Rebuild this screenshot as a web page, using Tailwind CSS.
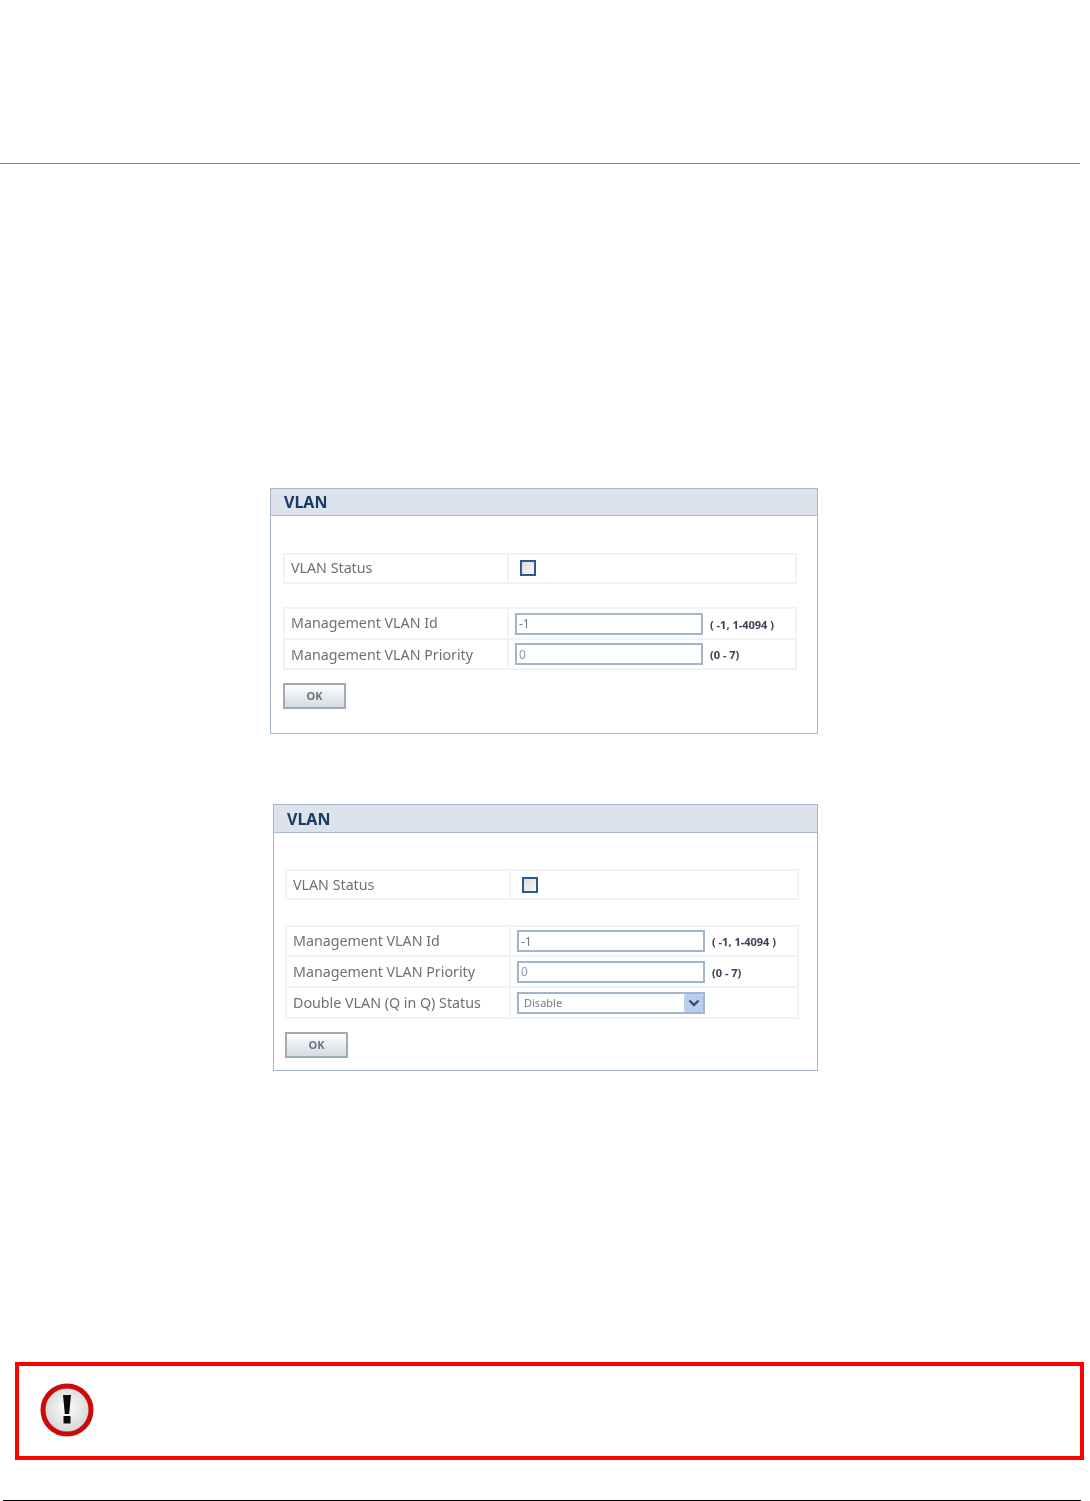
<!DOCTYPE html>
<html lang="en">
<head>
    <meta charset="UTF-8">
    <title>VLAN</title>
    <script src="https://cdn.jsdelivr.net/npm/@tailwindcss/browser@4"></script>
</head>
<body class="bg-white font-['Noto_Sans',sans-serif]">
    <!-- Top rule -->
    <div class="pt-[163px]">
        <div class="h-px w-[1080px] bg-[#808080]"></div>
    </div>

    <!-- VLAN panel, without Q in Q -->
    <section class="ml-[270px] mt-[324px] h-[246px] w-[548px] border border-[#a6b6cc] blur-[0.3px]">
        <h2 class="h-[27px] border-b border-[#a9b9cf] bg-[#dce3ec] pl-[13px] text-[16px] leading-[27px] font-bold text-[#1c3a66]">VLAN</h2>
        <div class="ml-[12px] mt-[37px] w-[514px] border-2 border-[#eef3f9]">
            <div class="flex h-[27px] items-center">
                <label class="flex h-full w-[224px] items-center border-r-2 border-[#eef3f9] pb-[2px] pl-[6px] text-[14.25px] text-[#6f7072]">VLAN Status</label>
                <input type="checkbox" class="ml-[11px] mt-[-1px] h-[16px] w-[16px] appearance-none border-2 border-[#2c5a8c] bg-linear-to-br from-[#dcdcd8] to-[#f8f8f8]">
            </div>
        </div>
        <div class="ml-[12px] mt-[23px] w-[514px] border-2 border-[#eef3f9]">
            <div class="flex h-[31px] items-center border-b-2 border-[#eef3f9]">
                <label class="flex h-full w-[224px] items-center border-r-2 border-[#eef3f9] pb-[2px] pl-[6px] text-[14.25px] text-[#6f7072]">Management VLAN Id</label>
                <input type="text" value="-1" class="ml-[6px] h-[22px] w-[188px] border-2 border-[#a3b5cc] pl-[2px] text-[12px] text-[#7a7a7a]">
                <span class="ml-[7px] mt-[4px] text-[11px] font-bold text-[#3d3d55]">( -1, 1-4094 )</span>
            </div>
            <div class="flex h-[28px] items-center">
                <label class="flex h-full w-[224px] items-center border-r-2 border-[#eef3f9] pt-[1px] pl-[6px] text-[14.25px] text-[#6f7072]">Management VLAN Priority</label>
                <input type="text" value="0" class="ml-[6px] h-[22px] w-[188px] border-2 border-[#a3b5cc] pl-[2px] text-[12px] text-[#8f9aa8]">
                <span class="ml-[7px] mt-[3px] text-[11px] font-bold text-[#3d3d55]">(0 - 7)</span>
            </div>
        </div>
        <button class="ml-[12px] mt-[13px] h-[26px] w-[63px] border-2 border-[#a0abb4] bg-linear-to-b from-white to-[#d3dbe4] text-[11px] font-bold text-[#6c7680]">OK</button>
    </section>

    <!-- VLAN panel, with Q in Q -->
    <section class="ml-[273px] mt-[70px] h-[267px] w-[545px] border border-[#a6b6cc] blur-[0.3px]">
        <h2 class="h-[28px] border-b border-[#a9b9cf] bg-[#dce3ec] pl-[13px] text-[16px] leading-[28px] font-bold text-[#1c3a66]">VLAN</h2>
        <div class="ml-[11px] mt-[36px] w-[514px] border-2 border-[#eef3f9]">
            <div class="flex h-[27px] items-center">
                <label class="flex h-full w-[224px] items-center border-r-2 border-[#eef3f9] pl-[6px] text-[14.25px] text-[#6f7072]">VLAN Status</label>
                <input type="checkbox" class="ml-[11px] h-[16px] w-[16px] appearance-none border-2 border-[#2c5a8c] bg-linear-to-br from-[#dcdcd8] to-[#f8f8f8]">
            </div>
        </div>
        <div class="ml-[11px] mt-[25px] w-[514px] border-2 border-[#eef3f9]">
            <div class="flex h-[30px] items-center border-b-2 border-[#eef3f9]">
                <label class="flex h-full w-[224px] items-center border-r-2 border-[#eef3f9] pb-[1px] pl-[6px] text-[14.25px] text-[#6f7072]">Management VLAN Id</label>
                <input type="text" value="-1" class="ml-[6px] h-[22px] w-[188px] border-2 border-[#a3b5cc] pl-[2px] text-[12px] text-[#7a7a7a]">
                <span class="ml-[7px] mt-[3px] text-[11px] font-bold text-[#3d3d55]">( -1, 1-4094 )</span>
            </div>
            <div class="flex h-[31px] items-center border-b-2 border-[#eef3f9]">
                <label class="flex h-full w-[224px] items-center border-r-2 border-[#eef3f9] pl-[6px] text-[14.25px] text-[#6f7072]">Management VLAN Priority</label>
                <input type="text" value="0" class="ml-[6px] h-[22px] w-[188px] border-2 border-[#a3b5cc] pl-[2px] text-[12px] text-[#8f9aa8]">
                <span class="ml-[7px] mt-[3px] text-[11px] font-bold text-[#3d3d55]">(0 - 7)</span>
            </div>
            <div class="flex h-[29px] items-center">
                <label class="flex h-full w-[224px] items-center border-r-2 border-[#eef3f9] pl-[6px] text-[14.25px] text-[#6f7072]">Double VLAN (Q in Q) Status</label>
                <div class="relative ml-[6px] mt-[1px] h-[22px] w-[188px] border-2 border-[#a3b5cc]">
                    <select class="block h-[18px] w-full appearance-none pl-[5px] text-[11px] leading-[16px] text-[#7a7a7a]"><option>Disable</option></select>
                    <span class="absolute right-0 top-0 flex h-[18px] w-[19px] items-center justify-center rounded-[2px] bg-[#b9cdf0]">
                        <svg width="12" height="8" viewBox="0 0 12 8"><path d="M1.5 1.5 6 6l4.5-4.5" fill="none" stroke="#3c4f73" stroke-width="2.4"/></svg>
                    </span>
                </div>
            </div>
        </div>
        <button class="ml-[11px] mt-[13px] h-[26px] w-[63px] border-2 border-[#a0abb4] bg-linear-to-b from-white to-[#d3dbe4] text-[11px] font-bold text-[#6c7680]">OK</button>
    </section>

    <!-- Warning note -->
    <div class="ml-[15px] mt-[291px] flex h-[98px] w-[1069px] items-center border-4 border-[#ff0000] pl-[21px]">
        <svg width="54" height="54" viewBox="0 0 54 54" class="mt-[-2px]">
            <defs>
                <radialGradient id="warnFill" cx="0.5" cy="0.45" r="0.55">
                    <stop offset="0" stop-color="#ffffff"/>
                    <stop offset="1" stop-color="#d2d2d2"/>
                </radialGradient>
            </defs>
            <circle cx="27" cy="27" r="24" fill="url(#warnFill)" stroke="#cc0a0a" stroke-width="5"/>
            <path d="M23 12h8l-1.8 19h-4.4z" fill="#0c0c0c"/>
            <rect x="23.5" y="33" width="7" height="7.5" fill="#0c0c0c"/>
        </svg>
    </div>

    <!-- Bottom rule -->
    <div class="ml-[3px] mt-[40px] h-px w-[1078px] bg-black"></div>
</body>
</html>
